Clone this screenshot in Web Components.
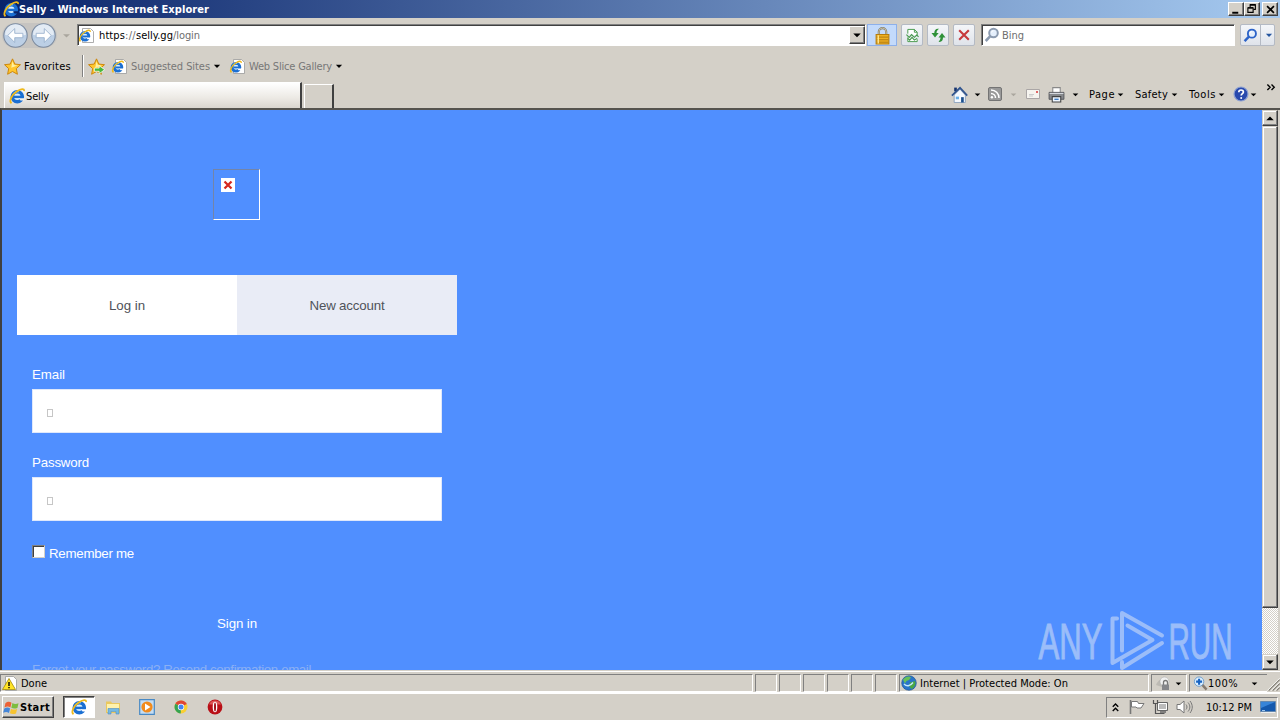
<!DOCTYPE html>
<html lang="en">
<head>
<meta charset="utf-8">
<title>Selly - Windows Internet Explorer</title>
<style>
  body {
    margin: 0;
    width: 1280px;
    height: 720px;
    overflow: hidden;
    background: #d4d0c8;
    font: 11px/14px "DejaVu Sans Condensed", "DejaVu Sans", sans-serif;
    color: #000;
  }
</style>
</head>
<body>
<ie-desktop></ie-desktop>

<script>
const make = (html) => {
  const t = document.createElement("template");
  t.innerHTML = html;
  return t;
};

class BaseElement extends HTMLElement {
  constructor() {
    super();
    this.attachShadow({ mode: "open" });
    this.shadowRoot.appendChild(this.constructor.template.content.cloneNode(true));
  }
}

// text run whose letter spacing is adjusted to a given width
class FitText extends BaseElement {
  static template = make(`
<style>
  :host { display: inline-block; vertical-align: top; flex: none; }
  span { display: block; width: max-content; white-space: nowrap; transform: translateY(1px); }
</style><span><slot></slot></span>`);

  connectedCallback() {
    const w = parseFloat(this.getAttribute("w"));
    const span = this.shadowRoot.querySelector("span");
    const n = this.textContent.length;
    span.style.letterSpacing = "0px";
    const natural = span.getBoundingClientRect().width;
    span.style.letterSpacing = (w - natural) / n + "px";
    this.style.width = w + "px";
  }
}

const page = `<path d="M3.500 1.500h8l3 3v11h-11z" fill="#fff" stroke="#999" stroke-width=".8"/>`;
const eGlyph = `
  <circle cx="8.300" cy="8.700" r="5" fill="#d9eefc" stroke="#1b6fd2" stroke-width="3.600"/>
  <path d="M5 8.900h9.500" stroke="#1b6fd2" stroke-width="2.400"/>
  <path d="M10 10.300h5.500v2.200h-4z" fill="var(--behind, #d4d0c8)"/>
  <path d="M4.300 6.600a4.500 4.500 0 0 1 5.500-2.800" stroke="#7fd0ff" stroke-width="1.300" fill="none"/>
  <path d="M2.500 15.200C-.5 13 3 6.500 8 3.200 12 .5 15.500.2 15 3" stroke="#efb91a" stroke-width="1.800" fill="none"/>`;
const star = `<path d="M8 .8l2.200 4.900 5.300.6-3.900 3.700 1 5.300L8 12.700l-4.600 2.600 1-5.300L.5 6.300l5.300-.6z" fill="#ffc62e" stroke="#c98309" stroke-width=".9"/><path d="M8 3l1.300 3.600 3.500.5-6 2z" fill="#fff0a0"/>`;

const icons = {
  ie: eGlyph,
  iepage: page + `<g transform="translate(-.5 2.500) scale(.78)" style="--behind: #fff">${eGlyph}</g>`,
  star,
  staradd: star + `<path d="M6 9.500h4.500V7.300L15.700 11l-5.200 3.800v-2.300H6z" fill="#49b83c" stroke="#fff" stroke-width=".7"/>`,
  lock: `<path d="M4.500 8V4.500a3.500 3.500 0 0 1 7 0V8" fill="none" stroke="#87806a" stroke-width="2"/><path d="M4.500 8V4.500a3.500 3.500 0 0 1 7 0V8" fill="none" stroke="#d8d2bc" stroke-width=".7"/><path d="M2 7h12v9H2z" fill="#efb021" stroke="#b77d0b"/><path d="M2.500 9.500h11M2.500 12h11M2.500 14.300h11" stroke="#a9740f" stroke-width=".8"/><path d="M4 7.800v7.800" stroke="#ffe994" stroke-width="1.300"/>`,
  compat: `<path d="M3 6V1.500h7l3 3V8M3 10v4.500h10V12" fill="#fff" stroke="#44994a"/><path d="M10 1.500v3h3" fill="none" stroke="#44994a"/><path d="M1.500 7l3 3 2.500-3 3 3 2.500-2.500 2 2M3 11l2 2 2.500-3 2.500 3 3-2" fill="none" stroke="#44994a" stroke-width="1.100"/>`,
  refresh: `<path d="M9 1.800C6 1.200 4.300 3 4.300 6H1.500L5 10.500 8.700 6H6.500c0-1.800.8-3 2.500-4.200z" fill="#2f9138"/><path d="M8.500 14.800c3 .6 4.500-1.300 4.500-4.300h2.500L12 6l-3.500 4.500h2c0 1.800-.7 3-2 4.300z" fill="#2f9138"/>`,
  stop: `<path d="M2.500 2.500l11 11M13.500 2.500l-11 11" stroke="#c7393d" stroke-width="2.400"/>`,
  search: `<circle cx="9.500" cy="6" r="4.300" fill="#e5effc" stroke="var(--lens, #2c63c8)" stroke-width="2"/><path d="M6.300 9.200L1.700 14" stroke="var(--lens, #2c63c8)" stroke-width="2.600"/><path d="M7.500 5.500a2 2 0 0 1 2-1.700" stroke="#fff" fill="none"/>`,
  home: `<path d="M3 1.500h2.500V5H3z" fill="#17346f"/><path d="M3 8.500L8.500 3l5 5.500v7H3z" fill="#f6faff" stroke="#7792b5" stroke-width=".7"/><path d="M.8 9L8.500 1.700 15.300 9" fill="none" stroke="#31558f" stroke-width="1.600"/><path d="M4.500 10h3v2.500h-3z" fill="#6ab0e8"/><path d="M9.500 10.500H12v5H9.500z" fill="#1a4e8c"/>`,
  rss: `<rect x="1.500" y="1.500" width="13" height="13" rx="1.500" fill="#999" stroke="#747474"/><path d="M4 4c4.500 0 8 3.500 8 8M4 7.500A4.500 4.500 0 0 1 8.500 12" stroke="#fff" stroke-width="1.500" fill="none"/><circle cx="4.900" cy="11.200" r="1.200" fill="#fff"/>`,
  mail: `<path d="M1.500 3.500h13v9h-13z" fill="#f6f4ef" stroke="#aaa6a6"/><path d="M11 5h2v2h-2z" fill="#e06666"/><path d="M4 8.500h5M4 10h4" stroke="#ccc"/>`,
  print: `<path d="M4.500 1.500h7V7h-7z" fill="#fff" stroke="#888"/><path d="M1 6h14v6.500H1z" fill="#87898d" stroke="#4e5055" stroke-width=".8"/><path d="M1.500 7h13" stroke="#d8dbe0"/><path d="M4 10h8v5H4z" fill="#eef6ff" stroke="#444"/><path d="M6 12.500h4" stroke="#3474c0" stroke-width="1.200"/>`,
  help: `<circle cx="8" cy="8" r="7" fill="#2849ad" stroke="#8ea1d2" stroke-width="1.200"/><path d="M5.800 6.200C5.800 3.300 10.400 3.300 10.400 6c0 1.700-2.200 1.700-2.200 3.600" fill="none" stroke="#fff" stroke-width="1.700"/><circle cx="8.200" cy="12" r="1" fill="#fff"/>`,
  warn: page + `<path d="M7 3.500l6.500 11H.5z" fill="#ffe426" stroke="#a38906" stroke-width=".8"/><path d="M7 7v4M7 12v1.300" stroke="#000" stroke-width="1.400"/>`,
  globe: `<circle cx="8" cy="8" r="7.300" fill="#2a75c9" stroke="#1a4c8c" stroke-width=".6"/><path d="M2 4.500C5 .5 9 1 10 2.500L8 5 5.500 6 4 8.500z" fill="#69c158"/><path d="M9 7.500l5-1.500c1.500 3-1 7-3.500 8L8 11z" fill="#49a843"/><path d="M3 9c2.500 2.500 6 2.500 9-1.500" stroke="#c5e8fb" stroke-width="1.400" fill="none"/>`,
  privacy: `<path d="M1 10c2-5 6-7 9-7l-3 9z" fill="#bdbab4"/><path d="M5 4l4-2v5z" fill="#fff" stroke="#aaa" stroke-width=".5"/><circle cx="9.500" cy="6.500" r="4.500" fill="#f0f0f0" stroke="#aaa" stroke-width=".5"/><path d="M8.500 10V7.500a2 2 0 0 1 4 0V10" stroke="#777" stroke-width="1.300" fill="none"/><path d="M7 9.500h7V15H7z" fill="#85868a"/>`,
  zoom: `<path d="M9.500 9l5 5.500" stroke="#857a70" stroke-width="2.600"/><circle cx="6.500" cy="6" r="5" fill="#dcefff" stroke="#6e9cc9"/><path d="M6.500 2.800v6.400M3.300 6h6.400" stroke="#1763c2" stroke-width="2.200"/>`,
  flagwin: `<path d="M1.500 3.500C4 1.500 6 1.600 8 3L6.800 8C4.800 6.700 3 6.800.5 8z" fill="#ec6135"/><path d="M9 3.300c2 1.200 4 1.200 6.500.2L14.300 8.400c-2.500 1-4.500 1-6.500-.1z" fill="#7dbd3e"/><path d="M.3 9c2.500-1.300 4.200-1.300 6.200 0l-1.200 4.800c-2-1.300-3.700-1.300-6.200-.2z" fill="#4586d8"/><path d="M7.500 9.300c2 1.200 4 1.200 6.500.2l-1.200 4.800c-2.500 1-4.500 1-6.500-.1z" fill="#f6c32f"/>`,
  folder: `<path d="M1 2.500h5l1 1.500h8v10H1z" fill="#eac85e"/><path d="M2 5h12v8H2z" fill="#fff2ac"/><path d="M3 15V9.500h11V15h-3v-2.500H6V15z" fill="#74b9e3" stroke="#4f8cbc" stroke-width=".6"/>`,
  wmp: `<path d="M.7.700h14.600v14.600H.7z" fill="#c4ddf3" stroke="#4889c4" stroke-width="1.200"/><circle cx="8" cy="8" r="5.600" fill="#f28b1c"/><path d="M6 4.500L11.500 8 6 11.500z" fill="#fff"/>`,
  chrome: `<circle cx="8" cy="8" r="6.500" fill="#f9cf32"/><path d="M8 8L2.400 4.700A6.500 6.500 0 0 1 13.800 5z" fill="#df4635"/><path d="M8 8L2.400 4.700a6.500 6.500 0 0 0 5.300 9.800z" fill="#35a352"/><circle cx="8" cy="8" r="3.200" fill="#fff"/><circle cx="8" cy="8" r="2.500" fill="#4384f3"/>`,
  opera: `<circle cx="8" cy="8" r="7.400" fill="#b90f16"/><path d="M2 5.500a6.500 6.500 0 0 1 12 0z" fill="#dd5555"/><ellipse cx="8" cy="8" rx="2.300" ry="5.300" fill="#fff"/><ellipse cx="8" cy="8" rx="1" ry="4.500" fill="#a01118"/>`,
  flag: `<path d="M1.500 1v14" stroke="#777" stroke-width="1.600"/><path d="M2.500 2.500h6l1 2h5.500l-3 4.500H8L7 8H2.500z" fill="#fff" stroke="#777"/>`,
  network: `<path d="M5.500 3.500h10v8h-10z" fill="#bbb" stroke="#666"/><path d="M6.500 4.500h8v6h-8z" fill="none" stroke="#fff"/><path d="M1.500 1v3.500h4V1M3.500 5v9.500h9" fill="none" stroke="#555" stroke-width="1.200"/><path d="M8 13h6" stroke="#666" stroke-width="1.500"/>`,
  sound: `<path d="M1 5.500h3L8 2v12l-4-3.500H1z" fill="#fff" stroke="#777"/><path d="M10 5.500c1.300 1.500 1.300 3.500 0 5M12 3.500c2.500 3 2.500 6 0 9M14 2c3 4 3 8 0 12" stroke="#777" fill="none"/>`,
  screen: `<path d="M.5 2.500h15v10H.5z" fill="#1458ad" stroke="#6488af"/><path d="M1 3h14L1 9z" fill="#3784d8"/><path d="M1 13.500h14" stroke="#eee"/><path d="M2 11.500h3" stroke="#9cc8f0"/>`,
  min: `<path d="M3 13h8" stroke="#000" stroke-width="2.600"/>`,
  restore: `<path d="M5 2h8M5 3h8M5.500 2v4M12.500 2v7M10 8.500h3" stroke="#000" stroke-width="1.500" fill="none"/><path d="M2.500 7v5.500h7V7" stroke="#000" stroke-width="1.500" fill="none"/><path d="M2 6.500h8" stroke="#000" stroke-width="2.200"/>`,
  close: `<path d="M3 3l10 10M13 3L3 13" stroke="#000" stroke-width="2.400"/>`,
  down: `<path d="M3 6h10l-5 5z" fill="currentColor"/>`,
  up: `<path d="M3 11h10L8 6z" fill="currentColor"/>`,
  chevrons: `<path d="M2 3.500l4 4-4 4M8 3.500l4 4-4 4" fill="none" stroke="#000" stroke-width="2"/>`,
  chevup: `<path d="M4 7l4-4 4 4M4 13l4-4 4 4" fill="none" stroke="#000" stroke-width="2"/>`,
  cross: `<path d="M0 0h16v16H0z" fill="#fff"/><path d="M4 4l8 8M12 4l-8 8" stroke="#d5281f" stroke-width="2.600"/>`,
  grip: `<path d="M15.500 3L3 15.500M15.500 7.500l-8 8M15.500 12L12 15.500" stroke="#858177" stroke-width="1.500"/><path d="M15.500 1.500L1.500 15.500M15.500 6l-9.500 9.500M15.500 10.500l-5 5" stroke="#fff"/>`,
  back: `<circle cx="8" cy="8" r="7.500" fill="#bccfe5" stroke="#7a899e" stroke-width=".65"/><path d="M1.300 7.500a6.700 6.700 0 0 1 13.400 0q-6.700 2-13.400 0z" fill="#e3ebf4"/><path d="M3 8l4.500-4.400v3h5.200v2.800H7.500v3z" fill="#fff" stroke="#8fa9c8" stroke-width=".5"/>`,
};

class UiIcon extends BaseElement {
  static template = make(`
<style>
  :host { display: block; flex: none; width: 16px; height: 16px; }
  svg { display: block; width: 100%; height: 100%; overflow: visible; }
</style><svg viewBox="0 0 16 16"></svg>`);

  connectedCallback() {
    this.shadowRoot.querySelector("svg").innerHTML = icons[this.getAttribute("name")];
    const s = this.getAttribute("size");
    if (s) {
      this.style.width = s + "px";
      this.style.height = s + "px";
    }
  }
}

class TitleBar extends BaseElement {
  static template = make(`
<style>
  :host {
    display: flex; align-items: center; height: 18px; box-sizing: border-box;
    padding: 0 2px 0 3px; color: #fff; font-weight: bold; --behind: #0a246a;
    background: linear-gradient(to right, #0a246a, #a6caf0);
  }
  .grow { flex: 1; }
  button {
    box-sizing: border-box; width: 16px; height: 14px; padding: 0; margin: 0;
    background: #d4d0c8; border: 1px solid; border-color: #fff #404040 #404040 #fff;
    box-shadow: inset -1px -1px #808080; display: grid; place-items: center;
  }
  .x { margin-left: 2px; }
</style>
<ui-icon name="ie"></ui-icon><fit-text w="190">Selly - Windows Internet Explorer</fit-text>
<div class="grow"></div>
<button><ui-icon name="min" size="12"></ui-icon></button>
<button><ui-icon name="restore" size="12"></ui-icon></button>
<button class="x"><ui-icon name="close" size="11"></ui-icon></button>`);
}

class AddressBar extends BaseElement {
  static template = make(`
<style>
  :host { display: flex; align-items: center; height: 34px; padding-left: 2px; }
  .nav { display: flex; gap: 3px; padding: 0 1px; border-radius: 13px; background: #c6c4c1; }
  .fwd { transform: scaleX(-1); }
  .hist { margin: 0 5px 0 4px; color: #aaa69e; }
  .field {
    box-sizing: border-box; display: flex; align-items: center; height: 22px; background: #fff;
    border: 1px solid; border-color: #808080 #fff #fff #808080; box-shadow: inset 1px 1px #404040;
  }
  .url { width: 789px; padding-left: 1px; }
  .url .dim, .search { color: #6e6e6e; }
  .url fit-text:first-of-type { margin-left: 4px; }
  .grow { flex: 1; }
  .drop {
    box-sizing: border-box; width: 16px; height: 18px; display: grid; place-items: center; background: #d4d0c8;
    border: 1px solid; border-color: #fff #404040 #404040 #fff; box-shadow: inset -1px -1px #808080;
  }
  .btn {
    box-sizing: border-box; width: 22px; height: 22px; display: grid; place-items: center;
    border: 1px solid #b4bac4; border-radius: 2px; background: linear-gradient(#f4f6f9, #dfe3ea);
  }
  .lock { width: 30px; margin: 0 4px 0 1px; border-color: #8db0ea; background: #c3dafb; border-radius: 0; }
  .gap { margin-right: 4px; }
  .search { width: 254px; margin-left: 6px; padding-left: 2px; --lens: #8c9bb0; gap: 2px; }
  .go { width: 35px; margin-left: 5px; display: flex; }
  .go ui-icon:first-child { margin: 0 2px; }
  .go div { border-left: 1px solid #b4bac4; height: 20px; display: grid; place-items: center; padding-left: 1px; color: #24559f; }
</style>
<div class="nav"><ui-icon name="back" size="25"></ui-icon><ui-icon class="fwd" name="back" size="25"></ui-icon></div>
<ui-icon class="hist" name="down" size="11"></ui-icon>
<div class="field url">
  <ui-icon name="iepage"></ui-icon>
  <fit-text w="26">https</fit-text><fit-text class="dim" w="11">://</fit-text><fit-text w="37">selly.gg</fit-text><fit-text class="dim" w="27">/login</fit-text>
  <div class="grow"></div><div class="drop"><ui-icon name="down" size="12"></ui-icon></div>
</div>
<div class="btn lock"><ui-icon name="lock" size="17"></ui-icon></div>
<div class="btn gap"><ui-icon name="compat" size="15"></ui-icon></div>
<div class="btn gap"><ui-icon name="refresh" size="16"></ui-icon></div>
<div class="btn"><ui-icon name="stop" size="14"></ui-icon></div>
<div class="field search"><ui-icon name="search"></ui-icon><fit-text w="22">Bing</fit-text></div>
<div class="btn go"><ui-icon name="search" size="15"></ui-icon><div><ui-icon name="down" size="10"></ui-icon></div></div>`);
}

class FavoritesBar extends BaseElement {
  static template = make(`
<style>
  :host { display: flex; align-items: center; height: 28px; padding-left: 4px; color: #777; }
  .fav { color: #000; margin-left: 3px; }
  .sep { width: 1px; height: 22px; margin: 0 4px 0 11px; background: #808080; border-right: 1px solid #fff; }
  .arrow { color: #000; margin: 0 8px 0 2px; }
  .page { margin-right: 3px; }
  .first { margin: 0 7px 0 0; }
</style>
<ui-icon name="star" size="17"></ui-icon><fit-text class="fav" w="47">Favorites</fit-text>
<div class="sep"></div>
<ui-icon class="first" name="staradd" size="17"></ui-icon>
<ui-icon class="page" name="iepage"></ui-icon><fit-text w="79">Suggested Sites</fit-text><ui-icon class="arrow" name="down" size="10"></ui-icon>
<ui-icon class="page" name="iepage"></ui-icon><fit-text w="83">Web Slice Gallery</fit-text><ui-icon class="arrow" name="down" size="10"></ui-icon>`);
}

class TabStrip extends BaseElement {
  static template = make(`
<style>
  :host { display: flex; align-items: flex-start; height: 28px; }
  .tab {
    box-sizing: border-box; display: flex; align-items: center; width: 298px; height: 26px; margin: 2px 0 0 4px;
    padding-left: 4px; gap: 1px; background: linear-gradient(#fff, #ece9e4 60%, #d9d5ce); --behind: #f2f0ec;
    border-left: 1px solid #fff; border-top: 1px solid #fff; border-right: 2px solid #404040;
  }
  .new { box-sizing: border-box; width: 30px; height: 24px; margin: 4px 0 0 2px; border: 1px solid #fff; border-bottom: 0; border-right: 2px solid #404040; }
  .grow { flex: 1; }
  .cmd { display: flex; align-items: center; height: 28px; }
  .more { margin: 2px 3px 0 0; }
</style>
<div class="tab"><ui-icon name="ie"></ui-icon><fit-text w="23">Selly</fit-text></div>
<div class="new"></div>
<div class="grow"></div>
<div class="cmd">
  <ui-icon name="home" size="17"></ui-icon>
  <ui-icon name="down" size="9" style="margin: 0 5px 0 5px"></ui-icon>
  <ui-icon name="rss"></ui-icon>
  <ui-icon name="down" size="9" style="margin: 0 7px 0 6px; color: #aaa69e"></ui-icon>
  <ui-icon name="mail"></ui-icon>
  <ui-icon name="print" size="17" style="margin-left: 7px"></ui-icon>
  <ui-icon name="down" size="9" style="margin: 0 9px 0 6px"></ui-icon>
  <fit-text w="26">Page</fit-text><ui-icon name="down" size="9" style="margin: 0 10px 0 1px"></ui-icon>
  <fit-text w="33">Safety</fit-text><ui-icon name="down" size="9" style="margin: 0 10px 0 2px"></ui-icon>
  <fit-text w="27">Tools</fit-text><ui-icon name="down" size="9" style="margin: 0 7px 0 1px"></ui-icon>
  <ui-icon name="help"></ui-icon><ui-icon name="down" size="9" style="margin: 0 8px 0 0"></ui-icon>
</div>
<ui-icon class="more" name="chevrons" size="11"></ui-icon>`);
}

class FormField extends BaseElement {
  static template = make(`
<style>
  :host { display: block; height: 88px; }
  label { display: block; height: 25px; line-height: 20px; }
  .box { box-sizing: border-box; height: 44px; padding: 20px 0 0 14px; background: #fff; border: 1px solid #dfe8fb; }
  i { display: block; box-sizing: border-box; width: 6px; height: 8px; border: 1px solid #c6c6c6; margin-top: -1px; }
</style>
<label><slot></slot></label><div class="box"><i></i></div>`);
}

class LoginForm extends BaseElement {
  static template = make(`
<style>
  :host { display: block; width: 440px; margin-left: 15px; color: #fff; font: 13.300px/20px "Liberation Sans", sans-serif; }
  .logo {
    box-sizing: border-box; width: 47px; height: 51px; margin: 59px 0 55px 196px; padding: 8px 0 0 7px;
    border: 1px solid; border-color: #7384a8 #fff #fff #7384a8;
  }
  .tabs { display: grid; grid-template-columns: 1fr 1fr; height: 60px; color: #4f535a; background: #fff; }
  .tabs div { display: grid; place-items: center; }
  .tabs .other { background: #e9ecf6; }
  .fields { padding: 29px 15px 0; }
  .check { display: flex; align-items: center; height: 20px; margin-top: 3px; gap: 4px; }
  .tick { box-sizing: border-box; width: 13px; height: 13px; background: #fff; border: 1px solid; border-color: #808080 #d4d0c8 #d4d0c8 #808080; box-shadow: inset 1px 1px #404040; margin-top: -3px; }
  .submit { text-align: center; margin-top: 50px; }
  .links { margin-top: 26px; color: #8bb0f4; }
</style>
<div class="logo"><ui-icon name="cross" size="14"></ui-icon></div>
<div class="tabs"><div><fit-text w="36">Log in</fit-text></div><div class="other"><fit-text w="75">New account</fit-text></div></div>
<div class="fields">
  <form-field><fit-text w="33">Email</fit-text></form-field>
  <form-field><fit-text w="57">Password</fit-text></form-field>
  <div class="check"><div class="tick"></div><fit-text w="85">Remember me</fit-text></div>
  <div class="submit"><fit-text w="40">Sign in</fit-text></div>
  <div class="links"><fit-text w="279">Forgot your password? Resend confirmation email</fit-text></div>
</div>`);
}

class ScrollBar extends BaseElement {
  static template = make(`
<style>
  :host {
    display: flex; flex-direction: column; width: 16px;
    background: repeating-conic-gradient(#fff 0 25%, #d4d0c8 0 50%) 0 0 / 2px 2px;
  }
  div {
    box-sizing: border-box; height: 16px; display: grid; place-items: center; background: #d4d0c8;
    border: 1px solid; border-color: #d4d0c8 #404040 #404040 #d4d0c8; box-shadow: inset -1px -1px #808080, inset 1px 1px #fff;
  }
  .thumb { height: 482px; }
  .end { margin-top: auto; }
</style>
<div><ui-icon name="up" size="12"></ui-icon></div>
<div class="thumb"></div>
<div class="end"><ui-icon name="down" size="12"></ui-icon></div>`);
}

class WaterMark extends BaseElement {
  static template = make(`
<style>
  :host { display: block; position: absolute; left: 1036px; top: 497px; width: 216px; height: 66px; }
  svg { display: block; overflow: visible; }
  text { font: 50px "Liberation Sans", sans-serif; fill: #9bbdf9; stroke: #9bbdf9; stroke-width: 1; }
  path { fill: none; stroke: #9bbdf9; stroke-width: 4; stroke-linejoin: round; stroke-linecap: round; }
</style>
<svg width="216" height="66" viewBox="1038 607 216 66">
  <text x="1038.500" y="659" textLength="64" lengthAdjust="spacingAndGlyphs">ANY</text>
  <text x="1168.500" y="659" textLength="64" lengthAdjust="spacingAndGlyphs">RUN</text>
  <path d="M1117 618.500h-4.500V663l40-23-25-14.500"/>
  <path d="M1122 650.500V613l40 22.500"/>
  <path d="M1122 662v6l40-25"/>
</svg>`);
}

class BrowserPage extends BaseElement {
  static template = make(`
<style>
  :host {
    box-sizing: border-box; display: flex; height: 562px; overflow: hidden; position: relative;
    border: solid #404040; border-width: 2px 0 0 2px; border-top-color: #55534e; padding-right: 2px;
  }
  .view { flex: 1; overflow: hidden; background: #508fff; }
</style>
<div class="view"><login-form></login-form></div>
<scroll-bar></scroll-bar>
<water-mark></water-mark>`);
}

class StatusBar extends BaseElement {
  static template = make(`
<style>
  :host { box-sizing: border-box; display: flex; height: 24px; padding: 3px 0 1px; gap: 2px; border-top: 1px solid #d4d0c8; border-bottom: 2px solid #fff; box-shadow: inset 0 1px #fff; }
  .cell { box-sizing: border-box; flex: none; display: flex; align-items: center; width: 22px; height: 18px; border: 1px solid; border-color: #808080 #fff #fff #808080; }
  .done { width: 753px; padding-left: 1px; gap: 3px; }
  .zone { width: 250px; padding-left: 1px; gap: 3px; }
  .priv { width: 36px; padding-left: 3px; gap: 3px; }
  .zoom { width: 78px; padding-left: 3px; border-right: 0; }
  .grip { margin-left: -3px; margin-top: 3px; }
</style>
<div class="cell done"><ui-icon name="warn"></ui-icon><fit-text w="26">Done</fit-text></div>
<div class="cell"></div><div class="cell"></div><div class="cell"></div><div class="cell"></div><div class="cell"></div><div class="cell"></div>
<div class="cell zone"><ui-icon name="globe"></ui-icon><fit-text w="148">Internet | Protected Mode: On</fit-text></div>
<div class="cell priv"><ui-icon name="privacy"></ui-icon><ui-icon name="down" size="9"></ui-icon></div>
<div class="cell zoom"><ui-icon name="zoom" size="15"></ui-icon><fit-text w="30" style="margin: 0 12px 0 0">100%</fit-text><ui-icon name="down" size="9"></ui-icon></div>
<ui-icon class="grip" name="grip" size="14"></ui-icon>`);
}

class TaskBar extends BaseElement {
  static template = make(`
<style>
  :host { box-sizing: border-box; display: flex; align-items: center; height: 26px; padding: 0 2px 0 2px; }
  .start {
    box-sizing: border-box; display: flex; align-items: center; gap: 1px; width: 52px; height: 22px; padding-left: 1px;
    font-weight: bold; border: 1px solid; border-color: #fff #404040 #404040 #fff; box-shadow: inset -1px -1px #808080;
  }
  .active {
    box-sizing: border-box; width: 32px; height: 22px; margin: 0 10px 0 9px; display: grid; place-items: center; --behind: #fff;
    background: #fff; border: 1px solid; border-color: #404040 #fff #fff #404040; box-shadow: inset 1px 1px #808080;
  }
  .apps { display: flex; gap: 18px; }
  .tray {
    box-sizing: border-box; display: flex; align-items: center; width: 172px; height: 21px; margin-left: auto;
    border: 1px solid; border-color: #808080 #fff #fff #808080; padding-left: 3px;
  }
</style>
<div class="start"><ui-icon name="flagwin" size="15"></ui-icon><fit-text w="30">Start</fit-text></div>
<div class="active"><ui-icon name="ie"></ui-icon></div>
<div class="apps"><ui-icon name="folder"></ui-icon><ui-icon name="wmp"></ui-icon><ui-icon name="chrome"></ui-icon><ui-icon name="opera"></ui-icon></div>
<div class="tray">
  <ui-icon name="chevup" size="11"></ui-icon>
  <ui-icon name="flag" style="margin: 0 7px 0 8px"></ui-icon>
  <ui-icon name="network"></ui-icon>
  <ui-icon name="sound" style="margin: 0 14px 0 8px"></ui-icon>
  <fit-text w="46">10:12 PM</fit-text>
  <ui-icon name="screen" style="margin-left: 8px"></ui-icon>
</div>`);
}

class IeDesktop extends BaseElement {
  static template = make(`
<style>
  :host { display: flex; flex-direction: column; width: 1280px; height: 720px; }
</style>
<title-bar></title-bar>
<address-bar></address-bar>
<favorites-bar></favorites-bar>
<tab-strip></tab-strip>
<browser-page></browser-page>
<status-bar></status-bar>
<task-bar></task-bar>`);
}

customElements.define("fit-text", FitText);
customElements.define("ui-icon", UiIcon);
customElements.define("title-bar", TitleBar);
customElements.define("address-bar", AddressBar);
customElements.define("favorites-bar", FavoritesBar);
customElements.define("tab-strip", TabStrip);
customElements.define("form-field", FormField);
customElements.define("login-form", LoginForm);
customElements.define("scroll-bar", ScrollBar);
customElements.define("water-mark", WaterMark);
customElements.define("browser-page", BrowserPage);
customElements.define("status-bar", StatusBar);
customElements.define("task-bar", TaskBar);
customElements.define("ie-desktop", IeDesktop);
</script>
</body>
</html>
